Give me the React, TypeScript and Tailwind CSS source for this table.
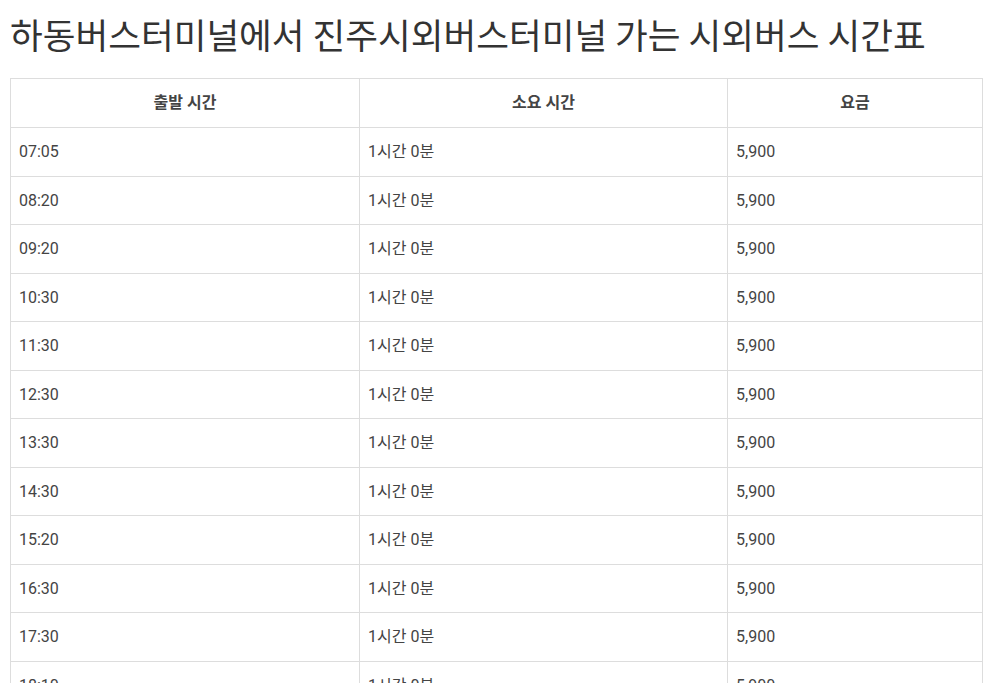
import React from "react";

const times = ["07:05","08:20","09:20","10:30","11:30","12:30","13:30","14:30","15:20","16:30","17:30","18:10","19:00","20:00"];

export default function App() {
  return (
    <div className="bg-white px-[10px] pt-[10px] text-[#333]">
      <h1 className="text-[35.6px] leading-[48px] font-normal text-[#333] mb-[20px] whitespace-nowrap" style={{ fontFamily: '"Noto Sans CJK KR", "Noto Sans", sans-serif' }}>
        하동버스터미널에서 진주시외버스터미널 가는 시외버스 시간표
      </h1>
      <table className="border-collapse w-[973px] text-[16px]" style={{ fontFamily: 'Roboto, "Noto Sans CJK KR", sans-serif' }}>
        <thead>
          <tr>
            <th className="w-[349px] border border-[#ddd] py-3 leading-[24px] text-[16px] font-semibold text-[#444] text-center">출발 시간</th>
            <th className="w-[368px] border border-[#ddd] py-3 leading-[24px] text-[16px] font-semibold text-[#444] text-center">소요 시간</th>
            <th className="border border-[#ddd] py-3 leading-[24px] text-[16px] font-semibold text-[#444] text-center">요금</th>
          </tr>
        </thead>
        <tbody>
          {times.map((t) => (
            <tr key={t}>
              <td className="border border-[#ddd] px-2 py-3 leading-[23.55px] text-[#444]">{t}</td>
              <td className="border border-[#ddd] px-2 py-3 leading-[23.55px] text-[#444]">1시간 0분</td>
              <td className="border border-[#ddd] px-2 py-3 leading-[23.55px] text-[#444]">5,900</td>
            </tr>
          ))}
        </tbody>
      </table>
    </div>
  );
}
